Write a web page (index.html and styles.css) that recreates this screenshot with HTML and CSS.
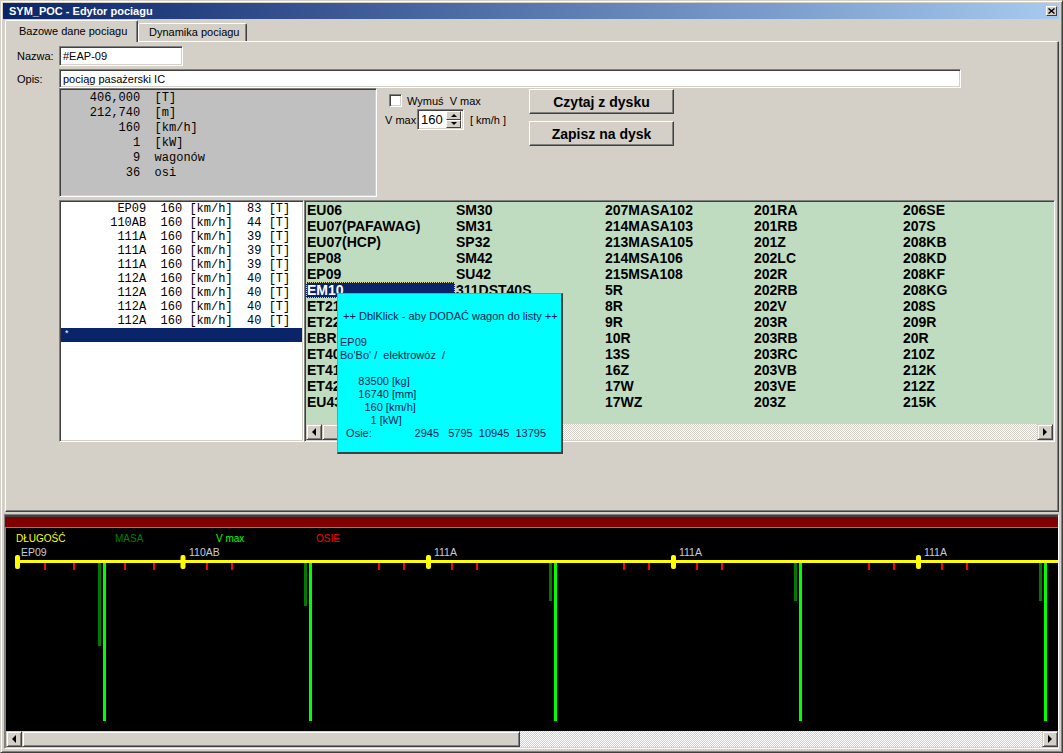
FILE: index.html
```html
<!DOCTYPE html>
<html lang="pl">
<head>
<meta charset="utf-8">
<title>SYM_POC - Edytor pociagu</title>
<link rel="stylesheet" href="styles.css">
</head>
<body>
<div class="window">
  <div class="titlebar">
    <span class="title">SYM_POC - Edytor pociagu</span>
    <span class="close"><svg width="7" height="6" viewBox="0 0 7 6"><path d="M0.5 0.5L6.5 5.5M6.5 0.5L0.5 5.5" stroke="#000" stroke-width="1.4"/></svg></span>
  </div>
  <div class="tabs">
    <div class="tab active">Bazowe dane pociagu</div>
    <div class="tab">Dynamika pociagu</div>
  </div>
  <div class="panel">
    <div class="row row1"><span class="lbl">Nazwa:</span><div class="input name">#EAP-09</div></div>
    <div class="row row2"><span class="lbl">Opis:</span><div class="input desc">pociąg pasażerski IC</div></div>
    <div class="row3">
      <pre class="info">    406,000  [T]
    212,740  [m]
        160  [km/h]
          1  [kW]
          9  wagonów
         36  osi</pre>
      <div class="vmax">
        <div class="chk-row"><span class="chk"></span><span class="chk-lbl">Wymuś  V max</span></div>
        <div class="spin-row">
          <span class="vlbl">V max</span>
          <div class="spin"><span class="spin-val">160</span><span class="spin-btns"><span class="spin-btn"><span class="arr-u"></span></span><span class="spin-btn"><span class="arr-d"></span></span></span></div>
          <span class="unit">[ km/h ]</span>
        </div>
      </div>
      <div class="buttons">
        <div class="btn">Czytaj z dysku</div>
        <div class="btn">Zapisz na dysk</div>
      </div>
    </div>
    <div class="row4">
      <div class="list">
        <div class="li">       EP09  160 [km/h]  83 [T]</div>
        <div class="li">      110AB  160 [km/h]  44 [T]</div>
        <div class="li">       111A  160 [km/h]  39 [T]</div>
        <div class="li">       111A  160 [km/h]  39 [T]</div>
        <div class="li">       111A  160 [km/h]  39 [T]</div>
        <div class="li">       112A  160 [km/h]  40 [T]</div>
        <div class="li">       112A  160 [km/h]  40 [T]</div>
        <div class="li">       112A  160 [km/h]  40 [T]</div>
        <div class="li">       112A  160 [km/h]  40 [T]</div>
        <div class="li sel"><span class="star">*</span></div>
      </div>
      <div class="grid">
        <div class="cells">
          <div class="cell">EU06</div><div class="cell">EU07(PAFAWAG)</div><div class="cell">EU07(HCP)</div><div class="cell">EP08</div><div class="cell">EP09</div><div class="cell sel">EM10</div><div class="cell">ET21</div><div class="cell">ET22</div><div class="cell">EBR</div><div class="cell">ET40</div><div class="cell">ET41</div><div class="cell">ET42</div><div class="cell">EU43</div>
          <div class="cell">SM30</div><div class="cell">SM31</div><div class="cell">SP32</div><div class="cell">SM42</div><div class="cell">SU42</div><div class="cell">311DST40S</div><div class="cell"></div><div class="cell"></div><div class="cell"></div><div class="cell"></div><div class="cell"></div><div class="cell"></div><div class="cell"></div>
          <div class="cell">207MASA102</div><div class="cell">214MASA103</div><div class="cell">213MASA105</div><div class="cell">214MSA106</div><div class="cell">215MSA108</div><div class="cell">5R</div><div class="cell">8R</div><div class="cell">9R</div><div class="cell">10R</div><div class="cell">13S</div><div class="cell">16Z</div><div class="cell">17W</div><div class="cell">17WZ</div>
          <div class="cell">201RA</div><div class="cell">201RB</div><div class="cell">201Z</div><div class="cell">202LC</div><div class="cell">202R</div><div class="cell">202RB</div><div class="cell">202V</div><div class="cell">203R</div><div class="cell">203RB</div><div class="cell">203RC</div><div class="cell">203VB</div><div class="cell">203VE</div><div class="cell">203Z</div>
          <div class="cell">206SE</div><div class="cell">207S</div><div class="cell">208KB</div><div class="cell">208KD</div><div class="cell">208KF</div><div class="cell">208KG</div><div class="cell">208S</div><div class="cell">209R</div><div class="cell">20R</div><div class="cell">210Z</div><div class="cell">212K</div><div class="cell">212Z</div><div class="cell">215K</div>
        </div>
        <div class="hscroll">
          <span class="sb-btn"><span class="arr-l"></span></span>
          <span class="sb-thumb grid-thumb"></span>
          <span class="sb-track"></span>
          <span class="sb-btn"><span class="arr-r"></span></span>
        </div>
      </div>
      <div class="tooltip">
        <div class="tt-line tt-head"> ++ DblKlick - aby DODAĆ wagon do listy ++</div>
        <div class="tt-line tt-gap">EP09</div>
        <div class="tt-line">Bo'Bo' /  elektrowóz  /</div>
        <div class="tt-line tt-gap">      83500 [kg]</div>
        <div class="tt-line">      16740 [mm]</div>
        <div class="tt-line">        160 [km/h]</div>
        <div class="tt-line">          1 [kW]</div>
        <div class="tt-line">  Osie:              2945   5795  10945  13795</div>
      </div>
    </div>
  </div>
  <div class="chart-wrap">
    <div class="red-band"></div>
    <div class="chart-panel">
      <svg class="chart" width="1052" height="203" viewBox="0 0 1052 203">
        <g class="legend">
          <text x="10" y="14" fill="#ffff00">DŁUGOŚĆ</text>
          <text x="109" y="14" fill="#008000">MASA</text>
          <text x="210" y="14" fill="#00ff00">V max</text>
          <text x="310" y="14" fill="#ff0000">OSIE</text>
        </g>
        <g fill="#007a00">
          <rect x="92" y="35" width="3" height="83"/>
          <rect x="298" y="35" width="3" height="43"/>
          <rect x="543" y="35" width="3" height="38"/>
          <rect x="788" y="35" width="3" height="38"/>
          <rect x="1033" y="35" width="3" height="38"/>
        </g>
        <g fill="#00ff00">
          <rect x="97" y="35" width="3" height="158"/>
          <rect x="303" y="35" width="3" height="158"/>
          <rect x="548" y="35" width="3" height="158"/>
          <rect x="793" y="35" width="3" height="158"/>
          <rect x="1038" y="35" width="3" height="158"/>
        </g>
        <g fill="#ff0000">
          <rect x="38" y="35" width="2" height="7"/>
          <rect x="67" y="35" width="2" height="7"/>
          <rect x="118" y="35" width="2" height="7"/>
          <rect x="147" y="35" width="2" height="7"/>
          <rect x="200" y="35" width="2" height="7"/>
          <rect x="225" y="35" width="2" height="7"/>
          <rect x="372" y="35" width="2" height="7"/>
          <rect x="397" y="35" width="2" height="7"/>
          <rect x="445" y="35" width="2" height="7"/>
          <rect x="470" y="35" width="2" height="7"/>
          <rect x="617" y="35" width="2" height="7"/>
          <rect x="642" y="35" width="2" height="7"/>
          <rect x="690" y="35" width="2" height="7"/>
          <rect x="715" y="35" width="2" height="7"/>
          <rect x="862" y="35" width="2" height="7"/>
          <rect x="887" y="35" width="2" height="7"/>
          <rect x="935" y="35" width="2" height="7"/>
          <rect x="960" y="35" width="2" height="7"/>
        </g>
        <rect x="10" y="32" width="1042" height="3" fill="#ffff00"/>
        <g fill="#ffff00">
          <rect x="9" y="27" width="5" height="14" rx="2"/>
          <rect x="174.5" y="27" width="5" height="14" rx="2"/>
          <rect x="420" y="27" width="5" height="14" rx="2"/>
          <rect x="665" y="27" width="5" height="14" rx="2"/>
          <rect x="910" y="27" width="5" height="14" rx="2"/>
        </g>
        <g class="vlabels" fill="#c6ccd8">
          <text x="15" y="28">EP09</text>
          <text x="183" y="28">110AB</text>
          <text x="428" y="28">111A</text>
          <text x="673" y="28">111A</text>
          <text x="918" y="28">111A</text>
        </g>
      </svg>
      <div class="hscroll">
        <span class="sb-btn"><span class="arr-l"></span></span>
        <span class="sb-thumb chart-thumb"></span>
        <span class="sb-track"></span>
        <span class="sb-btn"><span class="arr-r"></span></span>
      </div>
    </div>
  </div>
</div>
</body>
</html>
```
FILE: styles.css
```css
* { box-sizing: border-box; }
html, body { margin: 0; padding: 0; background: #d4d0c8; overflow: hidden; }
body { font-family: "Liberation Sans", Arial, sans-serif; font-size: 11px; color: #000; }

.window {
  width: 1063px; height: 753px;
  border: 1px solid; border-color: #d4d0c8 #404040 #404040 #d4d0c8;
  box-shadow: inset 1px 1px #fff, inset -1px -1px #808080;
  padding: 2px 3px 3px 2px;
  display: flex; flex-direction: column;
  background: #d4d0c8;
}

.titlebar {
  height: 16px; flex: none;
  background: linear-gradient(to right, #0a246a, #a6caf0);
  display: flex; align-items: center; justify-content: space-between;
  padding: 0 2px 0 6px;
  color: #fff; font-weight: bold; font-size: 11px;
}
.close {
  width: 11px; height: 10px;
  background: #d4d0c8;
  border: 1px solid; border-color: #fff #404040 #404040 #fff;
  display: flex; align-items: center; justify-content: center;
}
.close svg { display: block; }

.tabs { height: 22px; flex: none; display: flex; align-items: flex-end; padding-left: 2px; position: relative; z-index: 1; }
.tab {
  background: #d4d0c8;
  border: 1px solid; border-bottom: none;
  border-color: #fff #404040 transparent #fff;
  box-shadow: inset -1px 0 #808080;
  border-radius: 2px 2px 0 0;
  line-height: 13px;
  white-space: nowrap;
}
.tab.active { width: 133px; height: 22px; padding: 4px 0 0 13px; margin-bottom: -1px; }
.tab:not(.active) { width: 109px; height: 18px; padding: 2px 0 0 10px; }

.panel {
  margin-left: 2px; height: 471px; flex: none;
  border: 1px solid; border-color: #fff #404040 #404040 #fff;
  box-shadow: inset -1px -1px #808080;
}

.row { display: flex; align-items: center; }
.row1 { margin-top: 4px; height: 20px; }
.row2 { margin-top: 3px; height: 19px; }
.lbl { width: 53px; padding-left: 11px; }

.input, .info, .chk, .spin, .list, .grid {
  border: 1px solid; border-color: #808080 #fff #fff #808080;
  box-shadow: inset 1px 1px #404040, inset -1px -1px #d4d0c8;
}
.input { height: 20px; background: #fff; padding: 0 3px; display: flex; align-items: center; }
.name { width: 124px; }
.desc { width: 902px; height: 19px; }

.row3 { display: flex; padding-left: 53px; height: 109px; }
.info {
  width: 318px; height: 109px; margin: 0;
  background: #c0c0c0;
  font: 12px/15px "Liberation Mono", "Courier New", monospace;
  padding: 2px 0 0 1px;
}
.vmax { margin-left: 8px; width: 144px; display: flex; flex-direction: column; }
.chk-row { display: flex; align-items: center; margin-top: 6px; height: 13px; }
.chk { width: 13px; height: 13px; margin: 0 5px 0 4px; background: #fff; }
.chk-lbl { white-space: pre; }
.spin-row { display: flex; align-items: center; margin-top: 2px; height: 21px; }
.vlbl { width: 32px; }
.spin { width: 47px; height: 21px; background: #fff; display: flex; align-items: center; padding: 0 2px 0 2px; }
.spin-val { flex: 1; font-size: 13px; padding-left: 1px; }
.spin-btns { width: 15px; height: 17px; display: flex; flex-direction: column; }
.spin-btn {
  flex: 1; background: #d4d0c8;
  border: 1px solid; border-color: #fff #404040 #404040 #fff;
  display: flex; align-items: center; justify-content: center;
}
.arr-u { width: 0; height: 0; border-left: 3px solid transparent; border-right: 3px solid transparent; border-bottom: 3px solid #000; }
.arr-d { width: 0; height: 0; border-left: 3px solid transparent; border-right: 3px solid transparent; border-top: 3px solid #000; }
.unit { margin-left: 6px; }

.buttons { display: flex; flex-direction: column; gap: 7px; padding-top: 1px; }
.btn {
  width: 145px; height: 25px;
  background: #d4d0c8;
  border: 1px solid; border-color: #fff #404040 #404040 #fff;
  box-shadow: inset -1px -1px #808080;
  font-weight: bold; font-size: 14px;
  display: flex; align-items: center; justify-content: center;
}

.row4 { display: flex; margin-top: 3px; padding-left: 53px; height: 242px; position: relative; }
.list { width: 245px; height: 242px; background: #fff; padding: 1px 1px; }
.li { height: 14px; font: 12px/14px "Liberation Mono", "Courier New", monospace; white-space: pre; padding-left: 6px; }
.li.sel { background: #0a246a; color: #fff; padding-left: 3px; }
.star { font-size: 9px; line-height: 14px; vertical-align: top; }

.grid { width: 751px; height: 242px; background: #c0dcc0; display: flex; flex-direction: column; padding: 1px; }
.cells {
  display: grid; grid-template-rows: repeat(13, 16px); grid-auto-flow: column; grid-auto-columns: 149px;
  font: bold 14px/16px "Liberation Sans", Arial, sans-serif;
}
.cell { padding-left: 1px; white-space: nowrap; overflow: hidden; }
.cell.sel { background: #0a246a; color: #fff; outline: 1px dotted #d8d890; outline-offset: -1px; }
.grid .hscroll { margin-top: auto; }

.hscroll { display: flex; height: 16px; flex: none; }
.sb-btn {
  width: 16px; height: 16px; flex: none; background: #d4d0c8;
  border: 1px solid; border-color: #d4d0c8 #404040 #404040 #d4d0c8;
  box-shadow: inset 1px 1px #fff, inset -1px -1px #808080;
  display: flex; align-items: center; justify-content: center;
}
.sb-thumb {
  height: 16px; flex: none; background: #d4d0c8;
  border: 1px solid; border-color: #d4d0c8 #404040 #404040 #d4d0c8;
  box-shadow: inset 1px 1px #fff, inset -1px -1px #808080;
}
.grid-thumb { width: 80px; }
.chart-thumb { width: 498px; }
.sb-track { flex: 1; background: repeating-conic-gradient(#fff 0 25%, #d4d0c8 0 50%) 0 0 / 2px 2px; }
.arr-l { width: 0; height: 0; border-top: 4px solid transparent; border-bottom: 4px solid transparent; border-right: 4px solid #000; }
.arr-r { width: 0; height: 0; border-top: 4px solid transparent; border-bottom: 4px solid transparent; border-left: 4px solid #000; }

.tooltip {
  position: absolute; left: 331px; top: 93px;
  width: 226px; height: 161px;
  background: #00ffff;
  border: 1px solid #909090; border-right: 2px solid #404040; border-bottom: 2px solid #404040;
  padding: 16px 0 0 2px;
  font: 11px/13px "Liberation Sans", Arial, sans-serif;
  color: #0c2050;
  z-index: 2;
}
.tt-line { white-space: pre; height: 13px; }
.tt-gap { margin-top: 13px; }

.chart-wrap {
  margin: 2px 0 0 1px; height: 235px; flex: none;
  border: 1px solid; border-color: #808080 #fff #fff #808080;
  display: flex; flex-direction: column;
}
.red-band { height: 12px; flex: none; border-top: 2px solid #404040; background: #800000; }
.chart-panel { flex: 1; border-top: 1px solid #808080; border-left: 1px solid #808080; display: flex; flex-direction: column; }
.chart { display: block; background: #000; flex: none; }
.legend { font: 10px "Liberation Sans", Arial, sans-serif; }
.vlabels { font: 10.5px "Liberation Sans", Arial, sans-serif; }
```
